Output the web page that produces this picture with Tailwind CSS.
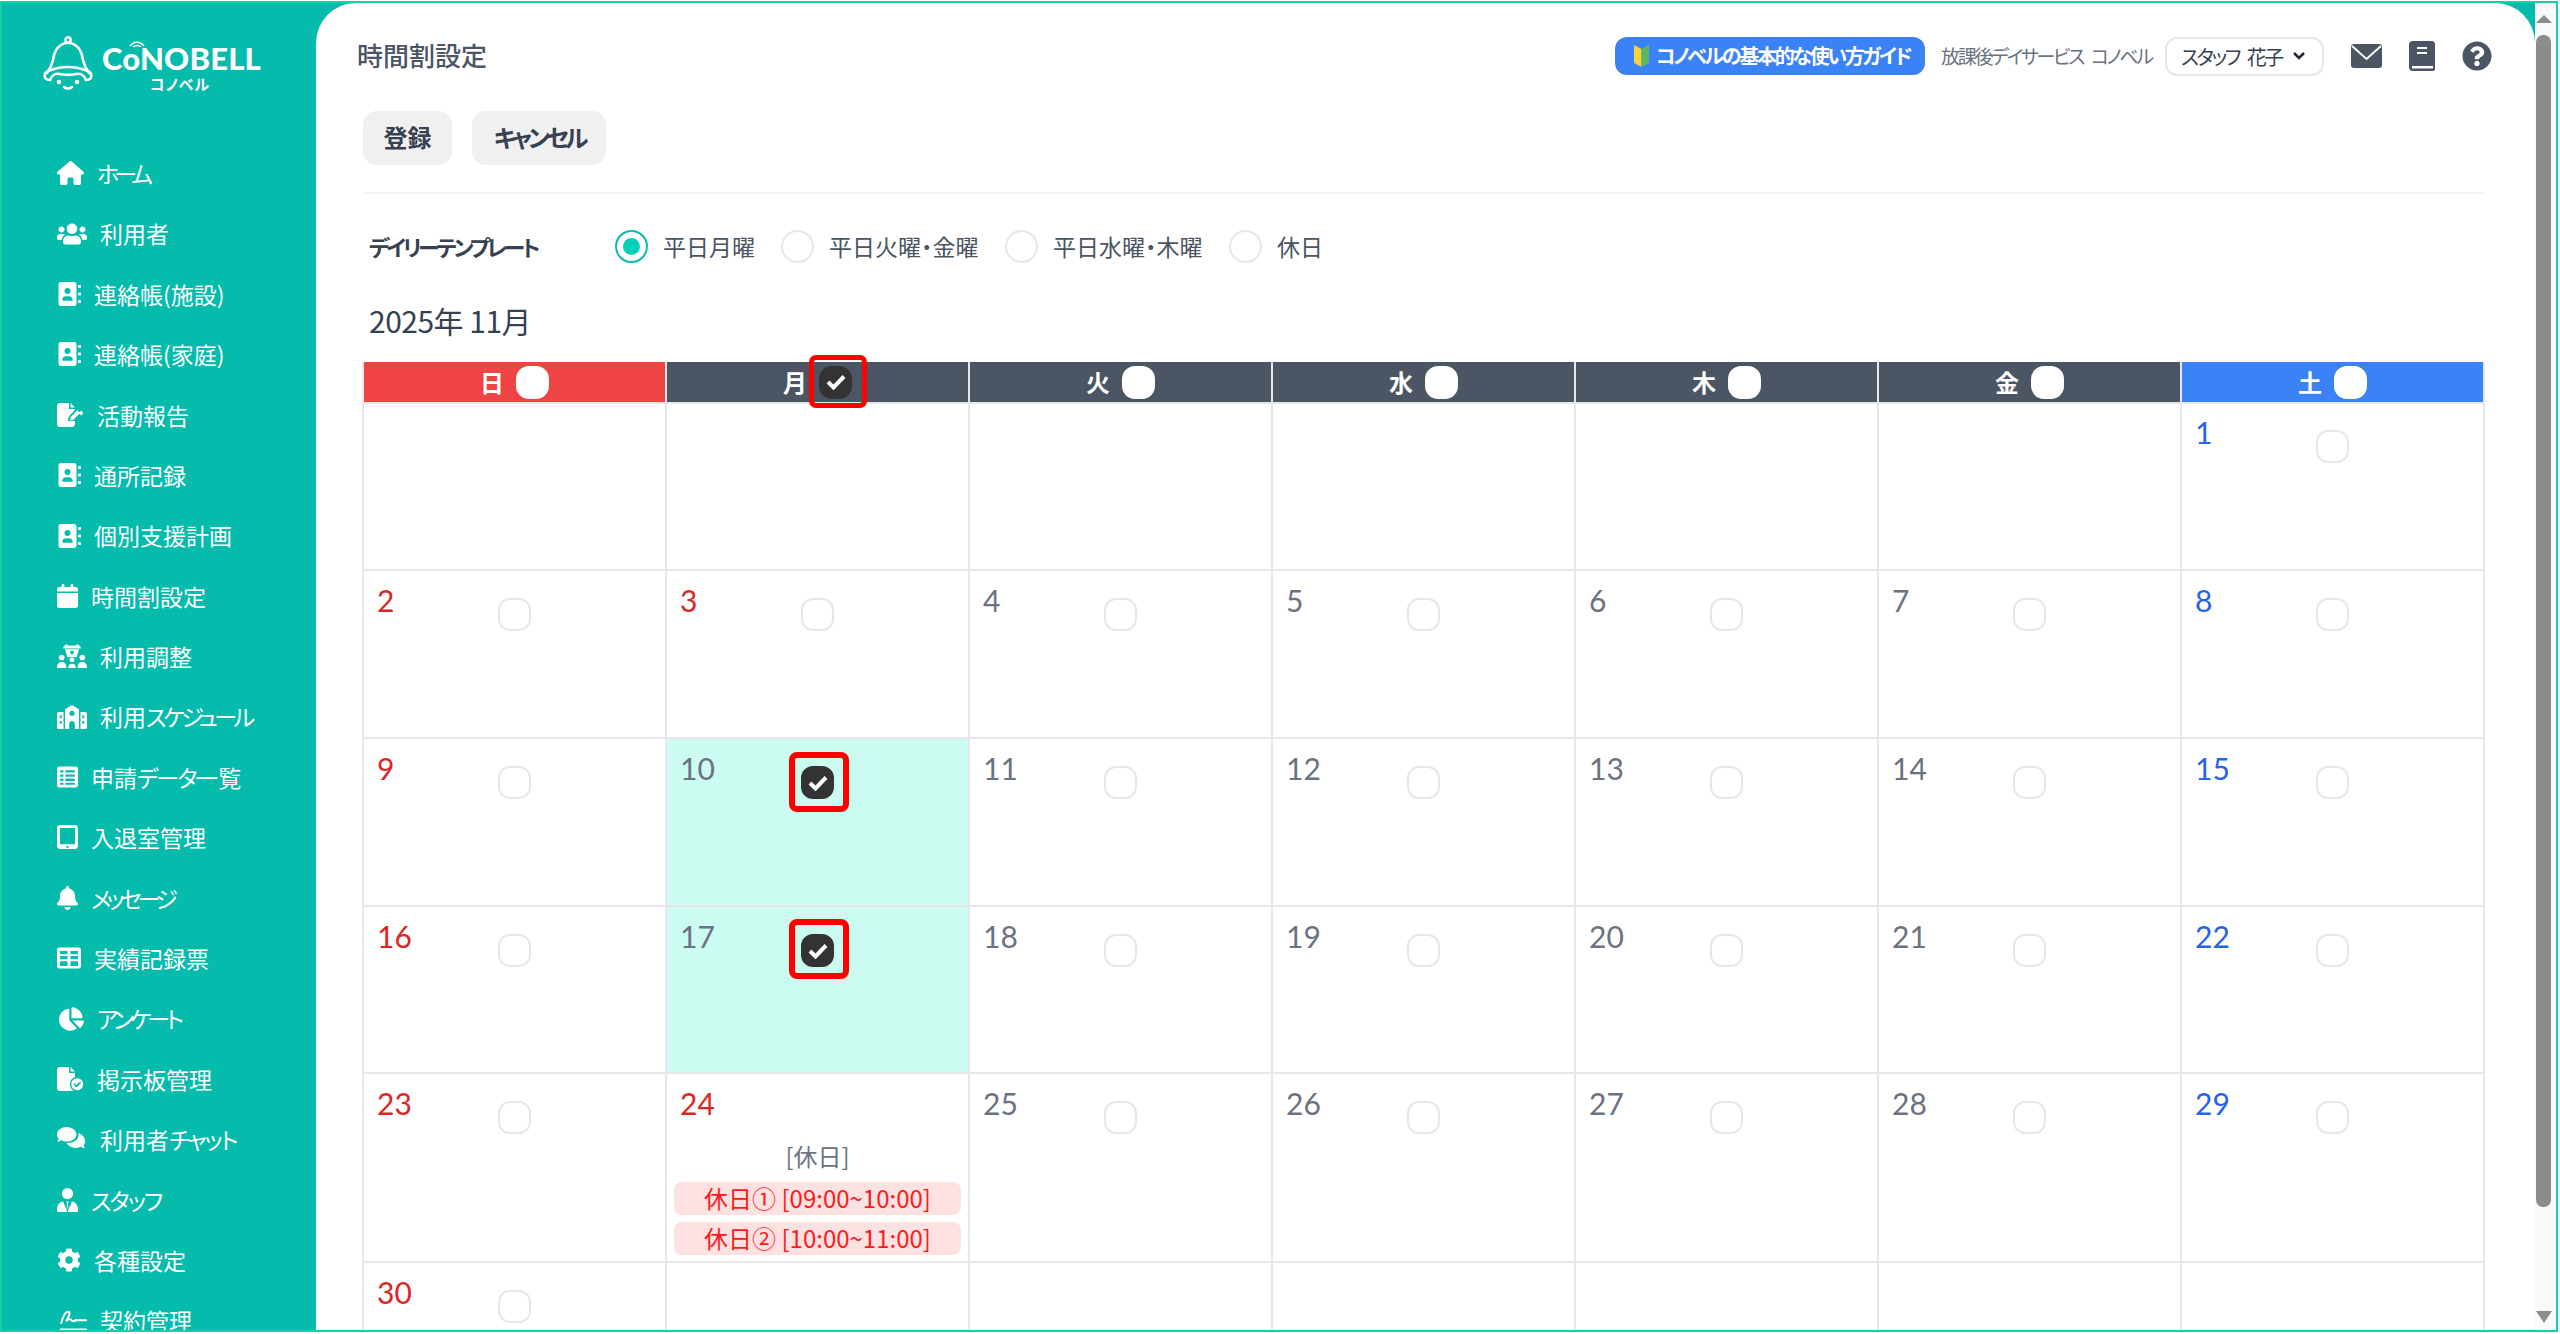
<!DOCTYPE html>
<html lang="ja">
<head>
<meta charset="utf-8">
<title>時間割設定</title>
<script src="https://cdn.jsdelivr.net/npm/@tailwindcss/browser@4"></script>
</head>
<body class="bg-white">
<div class="w-[2560px] h-[1334px] pt-px pr-[2px] pb-[2px] bg-white overflow-hidden font-['Noto_Sans_CJK_JP','Noto_Sans',sans-serif] [font-feature-settings:'palt']">
<div class="w-full h-full border-2 border-[#10d2a6] bg-[#04bbac] flex overflow-hidden">

<!-- sidebar -->
<aside class="w-[314px] h-full shrink-0 overflow-hidden text-white">
  <div class="h-[140px] pt-[33px] pl-[41px] flex">
    <svg class="w-[50px] h-[56px] shrink-0" viewBox="0 0 50 56" fill="none" stroke="white" stroke-width="2.6" stroke-linecap="round" stroke-linejoin="round">
      <circle cx="25" cy="4" r="2.6"/>
      <path d="M18 9c-5 3-7 8-8 15-1 5-3 9-6 13"/>
      <path d="M32 9c5 3 7 8 8 15 1 5 3 9 6 13"/>
      <path d="M18 9c4-3 10-3 14 0"/>
      <path d="M7 44c-4 0-6-2-5-6 1-3 3-3 6-4 10-4 24-4 34 0 3 1 5 1 6 4 1 4-1 6-5 6"/>
      <path d="M7 44c2-5 6-7 10-6 5 1 12 1 16 0 4-1 8 1 10 6"/>
      <circle cx="16" cy="46" r="1" fill="white"/><circle cx="34" cy="46" r="1" fill="white"/>
      <path d="M21 51c2 2 6 2 8 0"/>
    </svg>
    <div class="ml-[9px] w-[160px] relative">
      <div class="font-['Lato',sans-serif] font-black text-[31px] leading-[32px] mt-[6px] tracking-[0.2px] whitespace-nowrap">CoNOBELL</div>
      <svg class="absolute left-[27px] top-[3px] w-[16px] h-[8px]" viewBox="0 0 16 8" fill="none" stroke="white" stroke-width="1.6"><path d="M1 7c4-5 10-5 14 0"/><path d="M4 8c2-2 6-2 8 0"/></svg>
      <div class="text-[15px] leading-[16px] font-bold text-center mt-[2px] tracking-[1px] pr-[4px]">コノベル</div>
    </div>
  </div>
  <nav class="pl-[55px] text-[23px]">
    <a class="h-[60.4px] flex items-center gap-[13px]"><svg class="h-[24px] w-[27px] shrink-0" viewBox="0 0 576 512" fill="white"><path d="M575.8 255.5c0 18-15 32.100-32 32.100h-32l.7 160.200c0 2.700-.2 5.400-.5 8.100V472c0 22.100-17.900 40-40 40H456c-1.100 0-2.200 0-3.300-.1c-1.400 .1-2.800 .1-4.200 .1H416 392c-22.100 0-40-17.900-40-40V448 384c0-17.700-14.300-32-32-32H256c-17.700 0-32 14.300-32 32v64 24c0 22.100-17.900 40-40 40H160 128.100c-1.500 0-3-.1-4.500-.2c-1.200 .1-2.400 .2-3.600 .2H104c-22.100 0-40-17.900-40-40V360c0-.9 0-1.900 .1-2.800V287.600H32c-18 0-32-14-32-32.100c0-9 3-17 10-24L266.400 8c7-7 15-8 22-8s15 2 21 7L564.800 231.500c8 7 12 15 11 24z"/></svg><span class="tracking-[-5px]">ホーム</span></a>
    <a class="h-[60.4px] flex items-center gap-[13px]"><svg class="h-[24px] w-[30px] shrink-0" viewBox="0 0 640 512" fill="white"><path d="M96 224c35.3 0 64-28.7 64-64s-28.7-64-64-64-64 28.7-64 64 28.7 64 64 64zm448 0c35.3 0 64-28.7 64-64s-28.7-64-64-64-64 28.7-64 64 28.7 64 64 64zm32 32h-64c-17.6 0-33.5 7.1-45.1 18.6 40.3 22.1 68.9 62 75.1 109.4h66c17.7 0 32-14.3 32-32v-32c0-35.3-28.7-64-64-64zm-256 0c61.9 0 112-50.1 112-112S381.9 32 320 32 208 82.1 208 144s50.1 112 112 112zm76.8 32h-8.3c-20.8 10-43.9 16-68.5 16s-47.6-6-68.5-16h-8.3C179.6 288 128 339.6 128 403.2V432c0 26.5 21.5 48 48 48h288c26.5 0 48-21.5 48-48v-28.8c0-63.6-51.6-115.2-115.2-115.2zm-223.7-13.4C161.5 263.1 145.6 256 128 256H64c-35.3 0-64 28.7-64 64v32c0 17.7 14.3 32 32 32h65.9c6.3-47.4 34.9-87.3 75.2-109.4z"/></svg>利用者</a>
    <a class="h-[60.4px] flex items-center gap-[13px]"><svg class="h-[24px] w-[24px] shrink-0" viewBox="0 0 512 512"><path fill="white" fill-rule="evenodd" d="M80 0h288c26.5 0 48 21.5 48 48v416c0 26.5-21.5 48-48 48H80c-26.500 0-48-21.500-48-48V48C32 21.500 53.500 0 80 0zM224 256a64 64 0 1 0 0-128 64 64 0 0 0 0 128zm-32 48c-44 0-80 36-80 80 0 9 7 16 16 16h192c9 0 16-7 16-16 0-44-36-80-80-80h-64z"/><rect x="448" y="64" width="64" height="64" rx="16" fill="white"/><rect x="448" y="224" width="64" height="64" rx="16" fill="white"/><rect x="448" y="384" width="64" height="64" rx="16" fill="white"/></svg>連絡帳(施設)</a>
    <a class="h-[60.4px] flex items-center gap-[13px]"><svg class="h-[24px] w-[24px] shrink-0" viewBox="0 0 512 512"><path fill="white" fill-rule="evenodd" d="M80 0h288c26.5 0 48 21.5 48 48v416c0 26.5-21.5 48-48 48H80c-26.500 0-48-21.500-48-48V48C32 21.500 53.500 0 80 0zM224 256a64 64 0 1 0 0-128 64 64 0 0 0 0 128zm-32 48c-44 0-80 36-80 80 0 9 7 16 16 16h192c9 0 16-7 16-16 0-44-36-80-80-80h-64z"/><rect x="448" y="64" width="64" height="64" rx="16" fill="white"/><rect x="448" y="224" width="64" height="64" rx="16" fill="white"/><rect x="448" y="384" width="64" height="64" rx="16" fill="white"/></svg>連絡帳(家庭)</a>
    <a class="h-[60.4px] flex items-center gap-[13px]"><svg class="h-[24px] w-[27px] shrink-0" viewBox="0 0 576 512" fill="white"><path d="M64 0C28.700 0 0 28.700 0 64v384c0 35.300 28.700 64 64 64h256c35.300 0 64-28.700 64-64v-64L259 384c-8 0-14-3-19-8-4-6-6-13-4-20l16-62c3-9 7-17 13-24L384 150v-22H256V0H64zM288 0v96h96L288 0z"/><path d="M540 180c-16-16-40-16-56 0l-26 26 58 58 26-26c16-16 16-40 0-56l-2-2zM292 372l52-12c5-1 9-4 12-7l138-138-58-58-138 138c-3 3-6 7-7 12l-12 52c-2 7 6 15 13 13z"/></svg>活動報告</a>
    <a class="h-[60.4px] flex items-center gap-[13px]"><svg class="h-[24px] w-[24px] shrink-0" viewBox="0 0 512 512"><path fill="white" fill-rule="evenodd" d="M80 0h288c26.5 0 48 21.5 48 48v416c0 26.5-21.5 48-48 48H80c-26.500 0-48-21.500-48-48V48C32 21.500 53.500 0 80 0zM224 256a64 64 0 1 0 0-128 64 64 0 0 0 0 128zm-32 48c-44 0-80 36-80 80 0 9 7 16 16 16h192c9 0 16-7 16-16 0-44-36-80-80-80h-64z"/><rect x="448" y="64" width="64" height="64" rx="16" fill="white"/><rect x="448" y="224" width="64" height="64" rx="16" fill="white"/><rect x="448" y="384" width="64" height="64" rx="16" fill="white"/></svg>通所記録</a>
    <a class="h-[60.4px] flex items-center gap-[13px]"><svg class="h-[24px] w-[24px] shrink-0" viewBox="0 0 512 512"><path fill="white" fill-rule="evenodd" d="M80 0h288c26.5 0 48 21.5 48 48v416c0 26.5-21.5 48-48 48H80c-26.500 0-48-21.500-48-48V48C32 21.500 53.500 0 80 0zM224 256a64 64 0 1 0 0-128 64 64 0 0 0 0 128zm-32 48c-44 0-80 36-80 80 0 9 7 16 16 16h192c9 0 16-7 16-16 0-44-36-80-80-80h-64z"/><rect x="448" y="64" width="64" height="64" rx="16" fill="white"/><rect x="448" y="224" width="64" height="64" rx="16" fill="white"/><rect x="448" y="384" width="64" height="64" rx="16" fill="white"/></svg>個別支援計画</a>
    <a class="h-[60.4px] flex items-center gap-[13px]"><svg class="h-[24px] w-[21px] shrink-0" viewBox="0 0 448 512" fill="white"><path d="M96 32V64H48C21.500 64 0 85.500 0 112v48H448V112c0-26.500-21.500-48-48-48H352V32c0-17.700-14.300-32-32-32s-32 14.300-32 32V64H160V32c0-17.700-14.300-32-32-32S96 14.300 96 32zM448 192H0V464c0 26.500 21.500 48 48 48H400c26.500 0 48-21.500 48-48V192z"/></svg>時間割設定</a>
    <a class="h-[60.4px] flex items-center gap-[13px]"><svg class="h-[24px] w-[30px] shrink-0" viewBox="0 0 640 512" fill="white"><path d="M190 0h30v34h200V0h30v34h40l20 60H130l20-60h40V0z"/><path fill-rule="evenodd" d="M170 110h300l-50 170H220L170 110zm150 30a40 40 0 1 0 0 80 40 40 0 0 0 0-80z"/><circle cx="320" cy="340" r="50"/><path d="M240 512c0-60 30-90 80-90s80 30 80 90H240z"/><circle cx="100" cy="290" r="60"/><path d="M0 512c0-90 40-130 100-130s100 40 100 130H0z"/><circle cx="540" cy="290" r="60"/><path d="M440 512c0-90 40-130 100-130s100 40 100 130H440z"/></svg>利用調整</a>
    <a class="h-[60.4px] flex items-center gap-[13px]"><svg class="h-[24px] w-[30px] shrink-0" viewBox="0 0 640 512"><path fill="white" fill-rule="evenodd" d="M320 0l130 80c10 6 20 30 20 40v392H380V400c0-33-27-60-60-60s-60 27-60 60v112H170V120c0-10 10-34 20-40L320 0zm0 120a56 56 0 1 0 0 112 56 56 0 0 0 0-112z"/><path fill="white" fill-rule="evenodd" d="M40 150h100v362H40c-22 0-40-18-40-40V190c0-22 18-40 40-40zm20 70v60h40v-60H60zm0 120v60h40v-60H60zM500 150h100c22 0 40 18 40 40v282c0 22-18 40-40 40H500V150zm40 70v60h40v-60h-40zm0 120v60h40v-60h-40z"/></svg><span>利用<span class="tracking-[-3.500px]">スケジュール</span></span></a>
    <a class="h-[60.4px] flex items-center gap-[13px]"><svg class="h-[24px] w-[21px] shrink-0" viewBox="0 0 448 512"><path fill="white" fill-rule="evenodd" d="M48 32h352c26.500 0 48 21.500 48 48v352c0 26.500-21.500 48-48 48H48c-26.500 0-48-21.500-48-48V80c0-26.500 21.500-48 48-48zm20 80v50h70v-50H68zm110 0v50h202v-50H178zM68 200v50h70v-50H68zm110 0v50h202v-50H178zM68 290v50h70v-50H68zm110 0v50h202v-50H178zm-110 90v40h70v-40H68zm110 0v40h202v-40H178z"/></svg><span>申請<span class="tracking-[-2px]">データ</span>一覧</span></a>
    <a class="h-[60.4px] flex items-center gap-[13px]"><svg class="h-[24px] w-[21px] shrink-0" viewBox="0 0 448 512"><path fill="white" fill-rule="evenodd" d="M64 0h320c35 0 64 29 64 64v384c0 35-29 64-64 64H64c-35 0-64-29-64-64V64C0 29 29 0 64 0zm0 64v344h320V64H64zm160 376a26 26 0 1 0 0 52 26 26 0 0 0 0-52z"/></svg>入退室管理</a>
    <a class="h-[60.4px] flex items-center gap-[13px]"><svg class="h-[24px] w-[21px] shrink-0" viewBox="0 0 448 512" fill="white"><path d="M224 0c-17.700 0-32 14.300-32 32V51.200C119 66 64 130.600 64 208v18.800c0 47-17.300 92.400-48.500 127.600l-7.400 8.300c-8.400 9.400-10.400 22.900-5.300 34.400S19.400 416 32 416H416c12.600 0 24-7.400 29.200-18.900s3.100-25-5.300-34.400l-7.400-8.300C401.300 319.200 384 273.900 384 226.800V208c0-77.400-55-142-128-156.800V32c0-17.700-14.300-32-32-32zm45.300 493.300c12-12 18.700-28.300 18.700-45.300H224 160c0 17 6.700 33.300 18.700 45.300s28.300 18.700 45.300 18.700s33.300-6.700 45.300-18.700z"/></svg><span class="tracking-[-4.500px]">メッセージ</span></a>
    <a class="h-[60.4px] flex items-center gap-[13px]"><svg class="h-[24px] w-[24px] shrink-0" viewBox="0 0 512 512"><path fill="white" fill-rule="evenodd" d="M48 32h416c26.500 0 48 21.500 48 48v352c0 26.500-21.500 48-48 48H48c-26.500 0-48-21.500-48-48V80c0-26.500 21.500-48 48-48zm16 72v70h160v-70H64zm224 0v70h160v-70H288zM64 214v70h160v-70H64zm224 0v70h160v-70H288zM64 324v100h160V324H64zm224 0v100h160V324H288z"/></svg>実績記録票</a>
    <a class="h-[60.4px] flex items-center gap-[13px]"><svg class="h-[24px] w-[27px] pl-[2px] shrink-0" viewBox="0 0 544 512" fill="white"><path d="M527.790 288H290.500l158.030 158.030c6.040 6.040 15.980 6.530 22.190.68 38.700-36.460 65.320-85.610 73.130-140.860 1.340-9.460-6.510-17.850-16.060-17.850zm-15.830-64.800C503.720 103.740 408.260 8.280 288.800.04 279.680-.59 272 7.100 272 16.240V240h223.770c9.140 0 16.820-7.680 16.190-16.800zM224 288V50.710c0-9.550-8.390-17.400-17.840-16.060C86.990 51.490-4.100 155.600.14 280.370 4.500 408.510 114.830 513.590 243.030 511.980c50.400-.63 96.970-16.870 135.260-44.030 7.900-5.600 8.420-17.230 1.570-24.080L224 288z"/></svg><span class="tracking-[-4px]">アンケート</span></a>
    <a class="h-[60.4px] flex items-center gap-[13px]"><svg class="h-[24px] w-[27px] shrink-0" viewBox="0 0 576 512"><path fill="white" d="M64 0C28.700 0 0 28.700 0 64v384c0 35.300 28.700 64 64 64h256c35.300 0 64-28.700 64-64V128H256V0H64zM288 0v96h96L288 0z"/><circle cx="432" cy="368" r="144" fill="white" stroke="#04bbac" stroke-width="32"/><path d="M372 368l44 44 76-80" fill="none" stroke="#04bbac" stroke-width="36" stroke-linecap="round" stroke-linejoin="round"/></svg>掲示板管理</a>
    <a class="h-[60.4px] flex items-center gap-[13px]"><svg class="h-[24px] w-[30px] shrink-0" viewBox="0 0 640 512" fill="white"><path d="M208 0C93 0 0 71 0 160c0 36 15 68 40 94-8 26-24 46-38 60 32 0 66-14 88-30 34 16 74 26 118 26 115 0 208-71 208-150S323 0 208 0z"/><path d="M454 130c4 14 6 28 6 42 0 96-100 170-228 170-10 0-20 0-30-1 34 62 110 105 200 105 40 0 78-9 110-25 24 18 56 30 88 30-12-14-28-36-34-60 22-24 34-54 34-86 0-78-60-146-146-175z"/></svg><span>利用者<span class="tracking-[-2px]">チャット</span></span></a>
    <a class="h-[60.4px] flex items-center gap-[13px]"><svg class="h-[24px] w-[21px] shrink-0" viewBox="0 0 448 512"><circle cx="224" cy="120" r="120" fill="white"/><path fill="white" d="M130 288C58 300 0 362 0 448v32c0 18 14 32 32 32h384c18 0 32-14 32-32v-32c0-86-58-148-130-160L224 512 130 288z"/><path fill="white" d="M194 290h60l-12 50 30 130-48 42-48-42 30-130z"/><path d="M186 290l38 220 38-220" fill="none" stroke="#04bbac" stroke-width="22"/></svg><span class="tracking-[-2px]">スタッフ</span></a>
    <a class="h-[60.4px] flex items-center gap-[13px]"><svg class="h-[24px] w-[24px] shrink-0" viewBox="0 0 512 512" fill="white"><path d="M487.400 315.700l-42.600-24.600c4.300-23.200 4.300-47 0-70.200l42.600-24.600c4.900-2.800 7.100-8.600 5.500-14-11.100-35.600-30-67.800-54.700-94.600-3.800-4.100-10-5.100-14.800-2.300L380.800 110c-17.900-15.400-38.500-27.300-60.800-35.100V25.800c0-5.600-3.900-10.500-9.400-11.700-36.700-8.200-74.300-7.800-109.200 0-5.500 1.200-9.400 6.100-9.400 11.700V75c-22.200 7.900-42.800 19.800-60.800 35.100L88.700 85.500c-4.900-2.800-11-1.900-14.800 2.300-24.700 26.700-43.600 58.900-54.700 94.600-1.700 5.400.6 11.200 5.500 14L67.300 221c-4.300 23.200-4.300 47 0 70.200l-42.600 24.600c-4.900 2.800-7.100 8.600-5.500 14 11.100 35.600 30 67.800 54.700 94.600 3.800 4.100 10 5.100 14.800 2.300l42.600-24.600c17.900 15.400 38.500 27.300 60.800 35.100v49.200c0 5.600 3.900 10.500 9.400 11.700 36.700 8.200 74.300 7.800 109.200 0 5.500-1.200 9.400-6.100 9.400-11.700v-49.200c22.200-7.900 42.800-19.800 60.800-35.100l42.600 24.600c4.900 2.800 11 1.900 14.800-2.300 24.700-26.700 43.600-58.900 54.700-94.600 1.500-5.500-.7-11.300-5.600-14.100zM256 336c-44.100 0-80-35.900-80-80s35.900-80 80-80 80 35.900 80 80-35.900 80-80 80z"/></svg>各種設定</a>
    <a class="h-[60.4px] flex items-center gap-[13px]"><svg class="h-[24px] w-[30px] shrink-0" viewBox="0 0 640 512" fill="none" stroke="white" stroke-width="44" stroke-linecap="round" stroke-linejoin="round"><path d="M90 300c40-140 100-250 150-240 50 10 20 110-40 190 50-40 100-40 110-10 10 30 60 30 100-10"/><path d="M400 240h220M80 440h540"/></svg>契約管理</a>
  </nav>
</aside>

<!-- main -->
<main class="w-[2219px] h-full shrink-0 bg-white rounded-t-[40px] overflow-hidden pl-[47px] pr-[51px]">
  <header class="h-[106px] flex items-center -ml-[6px] -mr-[8px]">
    <h1 class="text-[26px] font-medium text-[#4b5563] pb-[3px]">時間割設定</h1>
    <a class="ml-auto h-[38px] w-[310px] rounded-[12px] bg-[#3b82f6] text-white font-bold text-[20px] flex items-center pl-[19px] whitespace-nowrap">
      <svg class="w-[15px] h-[24px] mr-[7px] shrink-0" viewBox="0 0 15 24"><path d="M0 1l7.500 4v18L0 19z" fill="#f5d33b"/><path d="M15 1L7.500 5v18L15 19z" fill="#5cb85c"/></svg><span class="tracking-[-2.300px]">コノベルの基本的な使い方ガイド</span>
    </a>
    <span class="ml-[16px] w-[209px] text-[19px] tracking-[-2.300px] [word-spacing:6px] text-[#6b7280] whitespace-nowrap">放課後デイサービス コノベル</span>
    <div class="ml-[15px] w-[159px] h-[39px] rounded-[12px] border-2 border-[#e5e7eb] flex items-center justify-between pl-[14px] pr-[16px] text-[20px] text-[#374151]">
      <span class="whitespace-nowrap tracking-[-2.500px] [word-spacing:6px] pt-[1px]">スタッフ 花子</span>
      <svg class="w-[14px] h-[10px]" viewBox="0 0 14 10" fill="none" stroke="#1f2937" stroke-width="2.600"><path d="M2 2l5 5 5-5"/></svg>
    </div>
    <svg class="ml-[27px] w-[31px] h-[24px] shrink-0" viewBox="0 0 31 24"><rect width="31" height="24" rx="3" fill="#4b5563"/><path d="M1 2l14.500 13L30 2" fill="none" stroke="white" stroke-width="2"/></svg>
    <svg class="ml-[27px] w-[26px] h-[30px] shrink-0" viewBox="0 0 26 30"><path d="M4 0h19c1.500 0 3 1.500 3 3v25c0 1.500-1.500 2-3 2H4c-2.500 0-4-1.500-4-4V4c0-2.500 1.500-4 4-4z" fill="#4b5563"/><path d="M8 7h10M8 12h10" stroke="white" stroke-width="2"/><path d="M3 25h21v2.500H3z" fill="white"/></svg>
    <svg class="ml-[27px] w-[30px] h-[30px] shrink-0" viewBox="0 0 512 512" fill="#4b5563"><path d="M504 256c0 136.997-111.043 248-248 248S8 392.997 8 256C8 119.083 119.043 8 256 8s248 111.083 248 248zM262.655 90c-54.497 0-89.255 22.957-116.549 63.758-3.536 5.286-2.353 12.415 2.715 16.258l34.699 26.310c5.205 3.947 12.621 3.008 16.665-2.122 17.864-22.658 30.113-35.797 57.303-35.797 20.429 0 45.698 13.148 45.698 32.958 0 14.976-12.363 22.667-32.534 33.976C247.128 238.528 216 254.941 216 296v4c0 6.627 5.373 12 12 12h56c6.627 0 12-5.373 12-12v-1.333c0-28.462 83.186-29.647 83.186-106.667 0-58.002-60.165-102-116.531-102zM256 338c-25.365 0-46 20.635-46 46 0 25.364 20.635 46 46 46s46-20.636 46-46c0-25.365-20.635-46-46-46z"/></svg>
  </header>

  <div class="mt-[2px] flex gap-[20px]">
    <button class="h-[54px] w-[89px] pb-[2px] rounded-[14px] bg-[#f0f0f0] text-[24px] font-bold text-[#374151]">登録</button>
    <button class="h-[54px] w-[134px] pb-[2px] rounded-[14px] bg-[#f0f0f0] text-[24px] font-bold text-[#374151] tracking-[-4px]">キャンセル</button>
  </div>
  <div class="mt-[27px] h-[2px] bg-[#f3f4f6]"></div>

  <div class="mt-[35px] h-[34px] flex items-center pl-[6px] text-[23px] text-[#4b5563]">
    <span class="w-[246px] font-bold text-[22px] tracking-[-3.300px] text-[#374151]">デイリーテンプレート</span>
    <span class="w-[33px] h-[33px] rounded-full border-2 border-[#04bbac] flex items-center justify-center"><span class="w-[17px] h-[17px] rounded-full bg-[#04d0b8]"></span></span>
    <span class="ml-[15px] w-[118px]">平日月曜</span>
    <span class="w-[33px] h-[33px] rounded-full border-2 border-[#e5e7eb]"></span>
    <span class="ml-[15px] w-[176px]">平日火曜・金曜</span>
    <span class="w-[33px] h-[33px] rounded-full border-2 border-[#e5e7eb]"></span>
    <span class="ml-[15px] w-[176px]">平日水曜・木曜</span>
    <span class="w-[33px] h-[33px] rounded-full border-2 border-[#e5e7eb]"></span>
    <span class="ml-[15px]">休日</span>
  </div>

  <div class="mt-[38px] h-[40px] pl-[6px] pb-[2px] flex items-center text-[30px] tracking-[-0.500px] text-[#374151]">2025年 11月</div>

  <div class="mt-[21px] -ml-px w-[2123px] border-l-2 border-[#e5e7eb]">
    <div class="grid grid-cols-7 h-[40px] text-white font-bold text-[24px]">
      <div class="bg-[#ef4444] border-r-2 border-[#e5e7eb] flex items-center justify-center gap-[12px]">日<span class="w-[33px] h-[33px] rounded-[13px] bg-white"></span></div>
      <div class="bg-[#4b5563] border-r-2 border-[#e5e7eb] flex items-center justify-center gap-[12px] relative">月<span class="w-[33px] h-[33px] rounded-[13px] bg-[#333333] flex items-center justify-center"><svg class="w-[20px] h-[16px]" viewBox="0 0 20 16" fill="none" stroke="white" stroke-width="4"><path d="M2 8l5.500 5.500L18 2.500"/></svg></span><span class="absolute left-[142px] -top-[7px] w-[58px] h-[53px] border-[5px] border-[#ff0000] rounded-[7px]"></span></div>
      <div class="bg-[#4b5563] border-r-2 border-[#e5e7eb] flex items-center justify-center gap-[12px]">火<span class="w-[33px] h-[33px] rounded-[13px] bg-white"></span></div>
      <div class="bg-[#4b5563] border-r-2 border-[#e5e7eb] flex items-center justify-center gap-[12px]">水<span class="w-[33px] h-[33px] rounded-[13px] bg-white"></span></div>
      <div class="bg-[#4b5563] border-r-2 border-[#e5e7eb] flex items-center justify-center gap-[12px]">木<span class="w-[33px] h-[33px] rounded-[13px] bg-white"></span></div>
      <div class="bg-[#4b5563] border-r-2 border-[#e5e7eb] flex items-center justify-center gap-[12px]">金<span class="w-[33px] h-[33px] rounded-[13px] bg-white"></span></div>
      <div class="bg-[#3b82f6] border-r-2 border-[#e5e7eb] flex items-center justify-center gap-[12px]">土<span class="w-[33px] h-[33px] rounded-[13px] bg-white"></span></div>
    </div>

    <div class="grid grid-cols-7 grid-rows-[167px_168px_168px_167px_189px_100px] font-['Lato','Noto_Sans_CJK_JP',sans-serif] text-[30px] leading-[30px] border-t-2 border-[#e5e7eb]">
      <div class="border-r-2 border-b-2 border-[#e5e7eb]"></div>
      <div class="border-r-2 border-b-2 border-[#e5e7eb]"></div>
      <div class="border-r-2 border-b-2 border-[#e5e7eb]"></div>
      <div class="border-r-2 border-b-2 border-[#e5e7eb]"></div>
      <div class="border-r-2 border-b-2 border-[#e5e7eb]"></div>
      <div class="border-r-2 border-b-2 border-[#e5e7eb]"></div>
      <div class="border-r-2 border-b-2 border-[#e5e7eb] grid grid-cols-[1fr_33px_1fr] content-start px-[13px]"><span class="mt-[13px] text-[#2563eb]">1</span><span class="mt-[26px] w-[33px] h-[33px] rounded-[12px] border-2 border-[#e5e7eb]"></span></div>

      <div class="border-r-2 border-b-2 border-[#e5e7eb] grid grid-cols-[1fr_33px_1fr] content-start px-[13px]"><span class="mt-[14px] text-[#dc2626]">2</span><span class="mt-[27px] w-[33px] h-[33px] rounded-[12px] border-2 border-[#e5e7eb]"></span></div>
      <div class="border-r-2 border-b-2 border-[#e5e7eb] grid grid-cols-[1fr_33px_1fr] content-start px-[13px]"><span class="mt-[14px] text-[#dc2626]">3</span><span class="mt-[27px] w-[33px] h-[33px] rounded-[12px] border-2 border-[#e5e7eb]"></span></div>
      <div class="border-r-2 border-b-2 border-[#e5e7eb] grid grid-cols-[1fr_33px_1fr] content-start px-[13px]"><span class="mt-[14px] text-[#6b7280]">4</span><span class="mt-[27px] w-[33px] h-[33px] rounded-[12px] border-2 border-[#e5e7eb]"></span></div>
      <div class="border-r-2 border-b-2 border-[#e5e7eb] grid grid-cols-[1fr_33px_1fr] content-start px-[13px]"><span class="mt-[14px] text-[#6b7280]">5</span><span class="mt-[27px] w-[33px] h-[33px] rounded-[12px] border-2 border-[#e5e7eb]"></span></div>
      <div class="border-r-2 border-b-2 border-[#e5e7eb] grid grid-cols-[1fr_33px_1fr] content-start px-[13px]"><span class="mt-[14px] text-[#6b7280]">6</span><span class="mt-[27px] w-[33px] h-[33px] rounded-[12px] border-2 border-[#e5e7eb]"></span></div>
      <div class="border-r-2 border-b-2 border-[#e5e7eb] grid grid-cols-[1fr_33px_1fr] content-start px-[13px]"><span class="mt-[14px] text-[#6b7280]">7</span><span class="mt-[27px] w-[33px] h-[33px] rounded-[12px] border-2 border-[#e5e7eb]"></span></div>
      <div class="border-r-2 border-b-2 border-[#e5e7eb] grid grid-cols-[1fr_33px_1fr] content-start px-[13px]"><span class="mt-[14px] text-[#2563eb]">8</span><span class="mt-[27px] w-[33px] h-[33px] rounded-[12px] border-2 border-[#e5e7eb]"></span></div>

      <div class="border-r-2 border-b-2 border-[#e5e7eb] grid grid-cols-[1fr_33px_1fr] content-start px-[13px]"><span class="mt-[14px] text-[#dc2626]">9</span><span class="mt-[27px] w-[33px] h-[33px] rounded-[12px] border-2 border-[#e5e7eb]"></span></div>
      <div class="border-r-2 border-b-2 border-[#e5e7eb] bg-[#ccfbf1] grid grid-cols-[1fr_33px_1fr] content-start px-[13px] relative"><span class="mt-[14px] text-[#6b7280]">10</span><span class="mt-[27px] w-[33px] h-[33px] rounded-[12px] bg-[#333333] flex items-center justify-center"><svg class="w-[20px] h-[16px]" viewBox="0 0 20 16" fill="none" stroke="white" stroke-width="4"><path d="M2 8l5.500 5.500L18 2.500"/></svg></span><span class="absolute left-[122px] top-[13px] w-[60px] h-[60px] border-[6px] border-[#ff0000] rounded-[8px]"></span></div>
      <div class="border-r-2 border-b-2 border-[#e5e7eb] grid grid-cols-[1fr_33px_1fr] content-start px-[13px]"><span class="mt-[14px] text-[#6b7280]">11</span><span class="mt-[27px] w-[33px] h-[33px] rounded-[12px] border-2 border-[#e5e7eb]"></span></div>
      <div class="border-r-2 border-b-2 border-[#e5e7eb] grid grid-cols-[1fr_33px_1fr] content-start px-[13px]"><span class="mt-[14px] text-[#6b7280]">12</span><span class="mt-[27px] w-[33px] h-[33px] rounded-[12px] border-2 border-[#e5e7eb]"></span></div>
      <div class="border-r-2 border-b-2 border-[#e5e7eb] grid grid-cols-[1fr_33px_1fr] content-start px-[13px]"><span class="mt-[14px] text-[#6b7280]">13</span><span class="mt-[27px] w-[33px] h-[33px] rounded-[12px] border-2 border-[#e5e7eb]"></span></div>
      <div class="border-r-2 border-b-2 border-[#e5e7eb] grid grid-cols-[1fr_33px_1fr] content-start px-[13px]"><span class="mt-[14px] text-[#6b7280]">14</span><span class="mt-[27px] w-[33px] h-[33px] rounded-[12px] border-2 border-[#e5e7eb]"></span></div>
      <div class="border-r-2 border-b-2 border-[#e5e7eb] grid grid-cols-[1fr_33px_1fr] content-start px-[13px]"><span class="mt-[14px] text-[#2563eb]">15</span><span class="mt-[27px] w-[33px] h-[33px] rounded-[12px] border-2 border-[#e5e7eb]"></span></div>

      <div class="border-r-2 border-b-2 border-[#e5e7eb] grid grid-cols-[1fr_33px_1fr] content-start px-[13px]"><span class="mt-[14px] text-[#dc2626]">16</span><span class="mt-[27px] w-[33px] h-[33px] rounded-[12px] border-2 border-[#e5e7eb]"></span></div>
      <div class="border-r-2 border-b-2 border-[#e5e7eb] bg-[#ccfbf1] grid grid-cols-[1fr_33px_1fr] content-start px-[13px] relative"><span class="mt-[14px] text-[#6b7280]">17</span><span class="mt-[27px] w-[33px] h-[33px] rounded-[12px] bg-[#333333] flex items-center justify-center"><svg class="w-[20px] h-[16px]" viewBox="0 0 20 16" fill="none" stroke="white" stroke-width="4"><path d="M2 8l5.500 5.500L18 2.500"/></svg></span><span class="absolute left-[122px] top-[12px] w-[60px] h-[60px] border-[6px] border-[#ff0000] rounded-[8px]"></span></div>
      <div class="border-r-2 border-b-2 border-[#e5e7eb] grid grid-cols-[1fr_33px_1fr] content-start px-[13px]"><span class="mt-[14px] text-[#6b7280]">18</span><span class="mt-[27px] w-[33px] h-[33px] rounded-[12px] border-2 border-[#e5e7eb]"></span></div>
      <div class="border-r-2 border-b-2 border-[#e5e7eb] grid grid-cols-[1fr_33px_1fr] content-start px-[13px]"><span class="mt-[14px] text-[#6b7280]">19</span><span class="mt-[27px] w-[33px] h-[33px] rounded-[12px] border-2 border-[#e5e7eb]"></span></div>
      <div class="border-r-2 border-b-2 border-[#e5e7eb] grid grid-cols-[1fr_33px_1fr] content-start px-[13px]"><span class="mt-[14px] text-[#6b7280]">20</span><span class="mt-[27px] w-[33px] h-[33px] rounded-[12px] border-2 border-[#e5e7eb]"></span></div>
      <div class="border-r-2 border-b-2 border-[#e5e7eb] grid grid-cols-[1fr_33px_1fr] content-start px-[13px]"><span class="mt-[14px] text-[#6b7280]">21</span><span class="mt-[27px] w-[33px] h-[33px] rounded-[12px] border-2 border-[#e5e7eb]"></span></div>
      <div class="border-r-2 border-b-2 border-[#e5e7eb] grid grid-cols-[1fr_33px_1fr] content-start px-[13px]"><span class="mt-[14px] text-[#2563eb]">22</span><span class="mt-[27px] w-[33px] h-[33px] rounded-[12px] border-2 border-[#e5e7eb]"></span></div>

      <div class="border-r-2 border-b-2 border-[#e5e7eb] grid grid-cols-[1fr_33px_1fr] content-start px-[13px]"><span class="mt-[14px] text-[#dc2626]">23</span><span class="mt-[27px] w-[33px] h-[33px] rounded-[12px] border-2 border-[#e5e7eb]"></span></div>
      <div class="border-r-2 border-b-2 border-[#e5e7eb] flex flex-col pt-[14px] px-[7px]"><span class="pl-[6px] text-[#dc2626]">24</span>
        <div class="mt-[20px] h-[36px] flex items-center justify-center font-['Noto_Sans_CJK_JP',sans-serif] text-[24px] text-[#6b7280]">[休日]</div>
        <div class="mt-[8px] h-[33px] pb-[2px] rounded-[8px] bg-[#fee2e2] text-[#ff1a1a] text-[24px] flex items-center justify-center font-['Noto_Sans_CJK_JP',sans-serif] whitespace-nowrap">休日① [09:00~10:00]</div>
        <div class="mt-[7px] h-[33px] pb-[2px] rounded-[8px] bg-[#fee2e2] text-[#ff1a1a] text-[24px] flex items-center justify-center font-['Noto_Sans_CJK_JP',sans-serif] whitespace-nowrap">休日② [10:00~11:00]</div>
      </div>
      <div class="border-r-2 border-b-2 border-[#e5e7eb] grid grid-cols-[1fr_33px_1fr] content-start px-[13px]"><span class="mt-[14px] text-[#6b7280]">25</span><span class="mt-[27px] w-[33px] h-[33px] rounded-[12px] border-2 border-[#e5e7eb]"></span></div>
      <div class="border-r-2 border-b-2 border-[#e5e7eb] grid grid-cols-[1fr_33px_1fr] content-start px-[13px]"><span class="mt-[14px] text-[#6b7280]">26</span><span class="mt-[27px] w-[33px] h-[33px] rounded-[12px] border-2 border-[#e5e7eb]"></span></div>
      <div class="border-r-2 border-b-2 border-[#e5e7eb] grid grid-cols-[1fr_33px_1fr] content-start px-[13px]"><span class="mt-[14px] text-[#6b7280]">27</span><span class="mt-[27px] w-[33px] h-[33px] rounded-[12px] border-2 border-[#e5e7eb]"></span></div>
      <div class="border-r-2 border-b-2 border-[#e5e7eb] grid grid-cols-[1fr_33px_1fr] content-start px-[13px]"><span class="mt-[14px] text-[#6b7280]">28</span><span class="mt-[27px] w-[33px] h-[33px] rounded-[12px] border-2 border-[#e5e7eb]"></span></div>
      <div class="border-r-2 border-b-2 border-[#e5e7eb] grid grid-cols-[1fr_33px_1fr] content-start px-[13px]"><span class="mt-[14px] text-[#2563eb]">29</span><span class="mt-[27px] w-[33px] h-[33px] rounded-[12px] border-2 border-[#e5e7eb]"></span></div>

      <div class="border-r-2 border-[#e5e7eb] grid grid-cols-[1fr_33px_1fr] content-start px-[13px]"><span class="mt-[14px] text-[#dc2626]">30</span><span class="mt-[27px] w-[33px] h-[33px] rounded-[12px] border-2 border-[#e5e7eb]"></span></div>
      <div class="border-r-2 border-[#e5e7eb]"></div>
      <div class="border-r-2 border-[#e5e7eb]"></div>
      <div class="border-r-2 border-[#e5e7eb]"></div>
      <div class="border-r-2 border-[#e5e7eb]"></div>
      <div class="border-r-2 border-[#e5e7eb]"></div>
      <div class="border-r-2 border-[#e5e7eb]"></div>
    </div>
  </div>
</main>

<!-- scrollbar -->
<div class="w-[21px] h-full shrink-0 bg-[#fafafa] flex flex-col pl-px relative">
  <svg class="w-[16px] h-[8px] mt-[12px] shrink-0" viewBox="0 0 16 8" fill="#8c8c8c"><path d="M8 0l8 8H0z"/></svg>
  <div class="w-[15px] h-[1172px] mt-[12px] rounded-[7px] bg-[#8c8c8c]"></div>
  <svg class="w-[16px] h-[12px] mt-[104px] shrink-0" viewBox="0 0 16 12" fill="#8c8c8c"><path d="M8 12L16 0H0z"/></svg>
</div>

</div>
</div>
</body>
</html>
